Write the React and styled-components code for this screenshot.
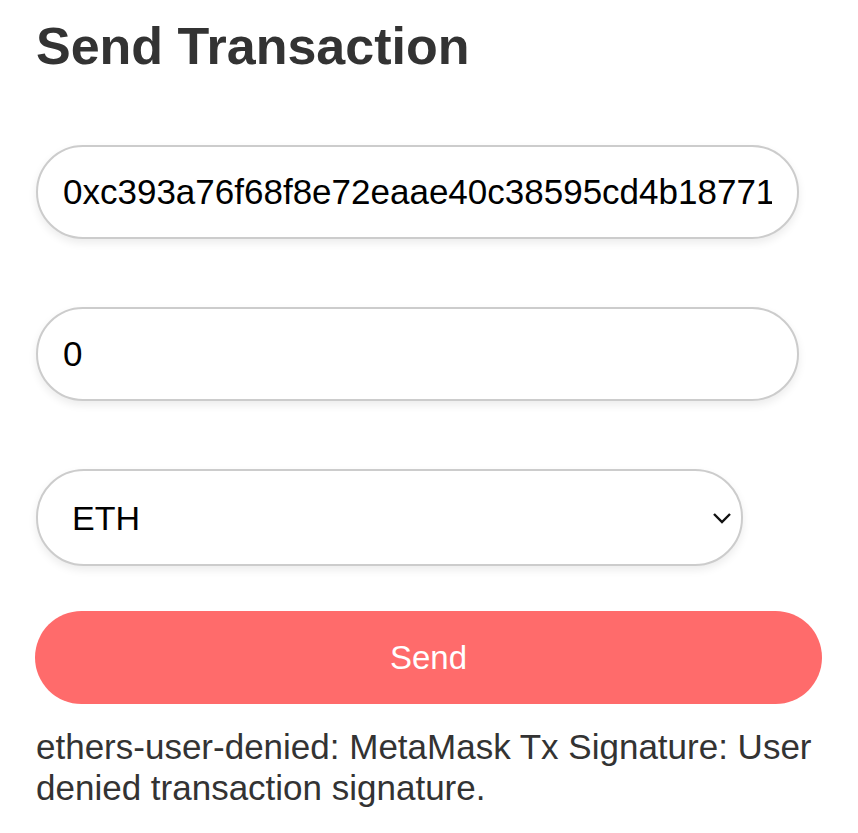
import styled, { createGlobalStyle } from "styled-components";

const Global = createGlobalStyle`
  body {
    margin: 0;
    background: #fff;
    font-family: "Liberation Sans", Arial, sans-serif;
  }
`;

const Page = styled.div`
  display: flex;
  flex-direction: column;
  align-items: flex-start;
  padding: 16px 0 0 36px;
`;

const Title = styled.h1`
  margin: 0 0 69px;
  font-size: 52px;
  line-height: 60px;
  font-weight: bold;
  color: #333;
`;

const Field = styled.input`
  box-sizing: border-box;
  width: ${(p) => p.width}px;
  height: 94px;
  margin-bottom: ${(p) => p.gap}px;
  padding: 0 25px;
  border: 2px solid #cccccc;
  border-radius: 47px;
  box-shadow: 0 4px 8px rgba(0, 0, 0, 0.08);
  font-family: "Liberation Sans", Arial, sans-serif;
  font-size: 35px;
  color: #000;
  background: #fff;
  outline: none;
`;

const SelectWrap = styled.div`
  position: relative;
  width: 707px;
  margin-bottom: 45px;
`;

const Select = styled.select`
  box-sizing: border-box;
  appearance: none;
  width: 100%;
  height: 97px;
  padding: 0 34px;
  border: 2px solid #cccccc;
  border-radius: 48px;
  box-shadow: 0 4px 8px rgba(0, 0, 0, 0.08);
  font-family: "Liberation Sans", Arial, sans-serif;
  font-size: 34px;
  color: #000;
  background: #fff;
  outline: none;
`;

const Chevron = styled.svg`
  position: absolute;
  right: 11px;
  top: 43px;
  pointer-events: none;
`;

const SendButton = styled.button`
  width: 787px;
  height: 93px;
  margin-left: -1px;
  margin-bottom: 22px;
  border: none;
  border-radius: 47px;
  background: #ff6b6b;
  color: #fff;
  font-family: "Liberation Sans", Arial, sans-serif;
  font-size: 33px;
  cursor: pointer;
`;

const ErrorText = styled.p`
  margin: 0;
  width: 790px;
  font-size: 35px;
  line-height: 41px;
  color: #333;
`;

export default function App() {
  return (
    <>
      <Global />
      <Page>
        <Title>Send Transaction</Title>
        <Field
          width={763}
          gap={68}
          defaultValue="0xc393a76f68f8e72eaae40c38595cd4b18771"
        />
        <Field width={763} gap={68} defaultValue="0" />
        <SelectWrap>
          <Select defaultValue="ETH">
            <option value="ETH">ETH</option>
          </Select>
          <Chevron width="20" height="12" viewBox="0 0 20 12">
            <path d="M2 2 L10 10 L18 2" fill="none" stroke="#111" strokeWidth="2.4" />
          </Chevron>
        </SelectWrap>
        <SendButton>Send</SendButton>
        <ErrorText>
          ethers-user-denied: MetaMask Tx Signature: User denied transaction
          signature.
        </ErrorText>
      </Page>
    </>
  );
}
